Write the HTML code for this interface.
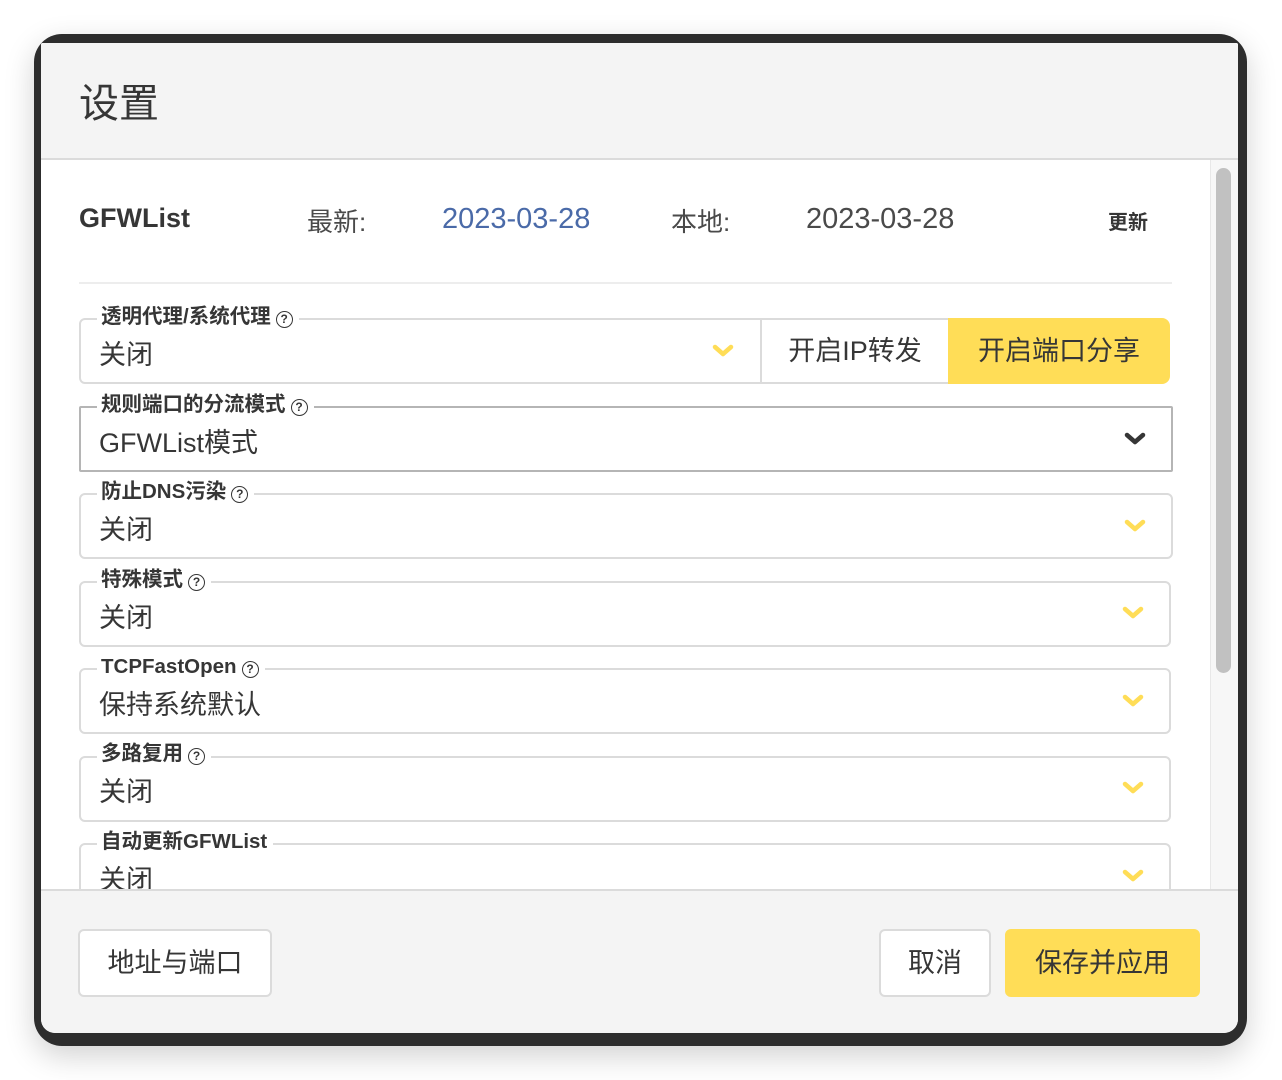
<!DOCTYPE html>
<html><head><meta charset="utf-8"><style>
*{box-sizing:border-box;margin:0;padding:0}
body{width:1282px;height:1080px;background:#fff;position:relative;overflow:hidden;font-family:"Liberation Sans","Noto Sans CJK SC",sans-serif;color:#363636}
.frame{position:absolute;left:34px;top:34px;width:1213px;height:1012px;background:#2d2d2d;border-radius:28px;box-shadow:0 10px 30px rgba(0,0,0,.18)}
.dlg{position:absolute;left:41px;top:43px;width:1197px;height:990px;background:#fff;border-radius:2px 2px 14px 14px;overflow:hidden}
.head{position:absolute;left:0;top:0;width:100%;height:117px;background:#f4f4f4;border-bottom:2px solid #dbdbdb}
.head h1{position:absolute;left:38px;top:28px;font-size:40px;font-weight:normal;color:#363636}
.foot{position:absolute;left:0;top:846px;width:100%;height:144px;background:#f4f4f4;border-top:2px solid #dbdbdb}
.abs{position:absolute}
.box{position:absolute;border:2px solid #dbdbdb;border-radius:6px;background:#fff}
.lg{position:absolute;background:#fff;padding:0 6px 0 4px;font-size:20.5px;font-weight:bold;color:#363636;line-height:20px;white-space:nowrap}
.val{position:absolute;font-size:27px;color:#363636;white-space:nowrap}
.q{display:inline-block;width:17px;height:17px;border:1.5px solid #363636;border-radius:50%;font-size:12px;line-height:14px;text-align:center;font-weight:bold;vertical-align:0px;margin-left:5px}
.chev{position:absolute;width:22px;height:14px}
.btn{position:absolute;border:2px solid #dbdbdb;border-radius:6px;background:#fff;font-size:27px;text-align:center;color:#363636}
</style></head><body>
<div class="frame"></div>
<div class="dlg">
<div class="head"><h1>设置</h1></div>
<div class="abs" style="left:1169px;top:117px;width:28px;height:729px;background:#f7f7f7;border-left:1px solid #e8e8e8"></div>
<div class="abs" style="left:1175px;top:125px;width:15px;height:505px;background:#c1c1c1;border-radius:8px"></div>

<div class="abs" style="left:38px;top:160px;font-size:27px;font-weight:bold;color:#363636">GFWList</div>
<div class="abs" style="left:266px;top:159px;font-size:26px;color:#4a4a4a">最新:</div>
<div class="abs" style="left:401px;top:160px;font-size:29px;color:#4a6aa8">2023-03-28</div>
<div class="abs" style="left:630px;top:159px;font-size:26px;color:#4a4a4a">本地:</div>
<div class="abs" style="left:765px;top:160px;font-size:29px;color:#4a4a4a">2023-03-28</div>
<div class="abs" style="left:1067px;top:163px;font-size:20px;font-weight:bold;color:#363636">更新</div>
<div class="abs" style="left:38px;top:239px;width:1093px;height:2px;background:#ededed"></div>

<div class="box" style="left:38px;top:275px;width:683px;height:66px;border-radius:6px 0 0 6px"></div>
<div class="lg" style="left:56px;top:264px">透明代理/系统代理<span class="q">?</span></div>
<div class="val" style="left:58px;top:290px">关闭</div>
<svg class="chev" style="left:671px;top:301px" viewBox="0 0 22 14"><polyline points="3,3 11,10 19,3" fill="none" stroke="#ffdd57" stroke-width="4.5" stroke-linecap="round" stroke-linejoin="round"/></svg>
<div class="btn" style="left:719px;top:275px;width:190px;height:66px;border-radius:0;line-height:62px">开启IP转发</div>
<div class="btn" style="left:907px;top:275px;width:222px;height:66px;border-radius:0 8px 8px 0;border-color:#ffdd57;background:#ffdd57;line-height:62px">开启端口分享</div>

<div class="box" style="left:38px;top:363px;width:1094px;height:66px;border-color:#b5b5b5;border-radius:2px"></div>
<div class="lg" style="left:56px;top:352px">规则端口的分流模式<span class="q">?</span></div>
<div class="val" style="left:58px;top:378px">GFWList模式</div>
<svg class="chev" style="left:1083px;top:389px" viewBox="0 0 22 14"><polyline points="3,3 11,10 19,3" fill="none" stroke="#363636" stroke-width="4.5" stroke-linecap="round" stroke-linejoin="round"/></svg>

<div class="box" style="left:38px;top:450px;width:1094px;height:66px"></div>
<div class="lg" style="left:56px;top:439px">防止DNS污染<span class="q">?</span></div>
<div class="val" style="left:58px;top:465px">关闭</div>
<svg class="chev" style="left:1083px;top:476px" viewBox="0 0 22 14"><polyline points="3,3 11,10 19,3" fill="none" stroke="#ffdd57" stroke-width="4.5" stroke-linecap="round" stroke-linejoin="round"/></svg>

<div class="box" style="left:38px;top:538px;width:1092px;height:66px"></div>
<div class="lg" style="left:56px;top:527px">特殊模式<span class="q">?</span></div>
<div class="val" style="left:58px;top:553px">关闭</div>
<svg class="chev" style="left:1081px;top:563px" viewBox="0 0 22 14"><polyline points="3,3 11,10 19,3" fill="none" stroke="#ffdd57" stroke-width="4.5" stroke-linecap="round" stroke-linejoin="round"/></svg>

<div class="box" style="left:38px;top:625px;width:1092px;height:66px"></div>
<div class="lg" style="left:56px;top:614px">TCPFastOpen<span class="q">?</span></div>
<div class="val" style="left:58px;top:640px">保持系统默认</div>
<svg class="chev" style="left:1081px;top:651px" viewBox="0 0 22 14"><polyline points="3,3 11,10 19,3" fill="none" stroke="#ffdd57" stroke-width="4.5" stroke-linecap="round" stroke-linejoin="round"/></svg>

<div class="box" style="left:38px;top:713px;width:1092px;height:66px"></div>
<div class="lg" style="left:56px;top:701px">多路复用<span class="q">?</span></div>
<div class="val" style="left:58px;top:727px">关闭</div>
<svg class="chev" style="left:1081px;top:738px" viewBox="0 0 22 14"><polyline points="3,3 11,10 19,3" fill="none" stroke="#ffdd57" stroke-width="4.5" stroke-linecap="round" stroke-linejoin="round"/></svg>

<div class="box" style="left:38px;top:800px;width:1092px;height:66px"></div>
<div class="lg" style="left:56px;top:789px">自动更新GFWList</div>
<div class="val" style="left:58px;top:815px">关闭</div>
<svg class="chev" style="left:1081px;top:826px" viewBox="0 0 22 14"><polyline points="3,3 11,10 19,3" fill="none" stroke="#ffdd57" stroke-width="4.5" stroke-linecap="round" stroke-linejoin="round"/></svg>

<div class="foot">
<div class="btn" style="left:37px;top:38px;width:194px;height:68px;line-height:64px">地址与端口</div>
<div class="btn" style="left:838px;top:38px;width:112px;height:68px;line-height:64px">取消</div>
<div class="btn" style="left:964px;top:38px;width:195px;height:68px;line-height:64px;background:#ffdd57;border-color:#ffdd57">保存并应用</div>
</div>
</div>
</body></html>
